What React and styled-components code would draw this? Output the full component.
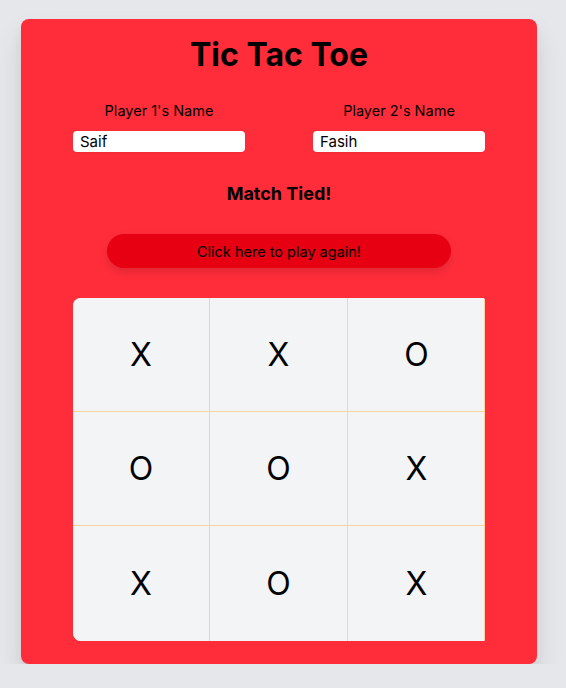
import styled, { createGlobalStyle } from 'styled-components';

const Global = createGlobalStyle`
  body {
    margin: 0;
    background: #e5e7eb;
    font-family: Inter, "Noto Sans", sans-serif;
    color: #000;
  }
`;

const Card = styled.main`
  box-sizing: border-box;
  width: 516px;
  margin: 19px 0 0 21px;
  padding: 16px 52px 23px;
  background: #ff2d3a;
  border-radius: 8px;
  box-shadow: 0 16px 28px rgba(0, 0, 0, 0.1), 0 6px 10px rgba(0, 0, 0, 0.05);
  display: flex;
  flex-direction: column;
  align-items: center;
`;

const Title = styled.h1`
  margin: 0;
  font-size: 32px;
  font-weight: 700;
  line-height: 40px;
`;

const Players = styled.div`
  margin-top: 26px;
  width: 100%;
  display: grid;
  grid-template-columns: 172px 172px;
  justify-content: space-between;
`;

const Field = styled.label`
  display: flex;
  flex-direction: column;
  align-items: center;
  gap: 11px;
  font-size: 14.5px;
  line-height: 19px;
`;

const NameInput = styled.input`
  box-sizing: border-box;
  width: 100%;
  height: 21px;
  border: none;
  border-radius: 4px;
  padding: 1px 7px;
  background: #fff;
  font-family: inherit;
  font-size: 15px;
  color: #000;
  box-shadow: 0 1px 2px rgba(0, 0, 0, 0.08);
  outline: none;
`;

const Status = styled.h2`
  margin: 30px 0 0;
  font-size: 18px;
  font-weight: 700;
  line-height: 24px;
`;

const Again = styled.button`
  margin-top: 28px;
  width: 344px;
  height: 34px;
  border: none;
  border-radius: 17px;
  background: #e60012;
  color: #000;
  font-family: inherit;
  font-size: 14.5px;
  box-shadow: 0 4px 8px rgba(0, 0, 0, 0.12);
  cursor: pointer;
`;

const Board = styled.div`
  margin-top: 30px;
  width: 412px;
  display: grid;
  grid-template-columns: 137px 138px 137px;
  grid-template-rows: 114px 114px 115px;
  border-radius: 8px 3px 2px 8px;
  overflow: hidden;
  background: #f3f4f6;
`;

const Cell = styled.button`
  border: none;
  border-right: ${(p) => (p.col < 2 ? '1px solid #fbd39c' : 'none')};
  border-bottom: ${(p) => (p.row < 2 ? '1px solid #fbd39c' : 'none')};
  ${(p) => p.col === 2 && 'box-shadow: inset -1px 0 0 #fbd39c;'}
  background: #f3f4f6;
  font-family: Inter, "Noto Sans", sans-serif;
  font-size: 32px;
  color: #000;
  padding: 0;
  cursor: pointer;
`;

const squares = ['X', 'X', 'O', 'O', 'O', 'X', 'X', 'O', 'X'];

export default function App() {
  return (
    <>
      <Global />
      <Card>
        <Title>Tic Tac Toe</Title>
        <Players>
          <Field>
            Player 1's Name
            <NameInput defaultValue="Saif" />
          </Field>
          <Field>
            Player 2's Name
            <NameInput defaultValue="Fasih" />
          </Field>
        </Players>
        <Status>Match Tied!</Status>
        <Again>Click here to play again!</Again>
        <Board>
          {squares.map((s, i) => (
            <Cell key={i} row={Math.floor(i / 3)} col={i % 3}>
              {s}
            </Cell>
          ))}
        </Board>
      </Card>
    </>
  );
}
